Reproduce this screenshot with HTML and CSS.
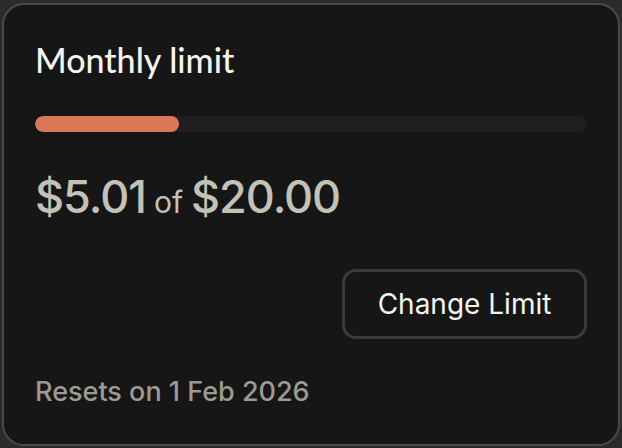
FILE: index.html
```html
<!DOCTYPE html>
<html>
<head>
<meta charset="utf-8">
<link rel="stylesheet" href="styles.css">
</head>
<body>
<div class="card">
  <h1 class="title">Monthly limit</h1>
  <div class="track"><div class="fill" style="width:26%"></div></div>
  <div class="amount"><span class="big">$5.01</span><span class="of">of</span><span class="big">$20.00</span></div>
  <div class="actions"><button class="btn">Change Limit</button></div>
  <div class="reset">Resets on 1 Feb 2026</div>
</div>
</body>
</html>
```
FILE: styles.css
```css
html, body { margin: 0; padding: 0; }
body {
  background: #2b2b29;
  width: 622px;
  height: 448px;
  font-family: "Inter", "Lato", sans-serif;
}
.card {
  box-sizing: border-box;
  margin: 3px 2px 0 2px;
  width: 618px;
  height: 443px;
  background: #161616;
  border: 2px solid #4b4b46;
  border-radius: 22px;
  padding: 35px 31px 0 31px;
  display: flex;
  flex-direction: column;
}
.title {
  margin: 0;
  font-family: "Lato", sans-serif;
  font-weight: 500;
  font-size: 34px;
  line-height: 40px;
  color: #f5f4ef;
}
.track {
  margin-top: 36px;
  height: 16px;
  border-radius: 8px;
  background: #201f1e;
  overflow: hidden;
}
.fill {
  height: 100%;
  background: #d97757;
  border-radius: 8px;
}
.amount {
  margin-top: 38px;
  display: flex;
  align-items: baseline;
  gap: 8px;
  color: #c3c1b8;
  line-height: 54px;
}
.big { font-size: 45px; font-weight: 500; letter-spacing: -1px; }
.of { font-size: 30px; }
.actions {
  margin-top: 40px;
  display: flex;
  justify-content: flex-end;
}
.btn {
  box-sizing: border-box;
  width: 245px;
  height: 70px;
  background: #161616;
  border: 3px solid #3a3a39;
  border-radius: 14px;
  color: #f5f4ef;
  font-family: "Inter", sans-serif;
  font-size: 28px;
  font-weight: 400;
}
.reset {
  margin-top: 37px;
  font-size: 27px;
  line-height: 32px;
  font-weight: 500;
  color: #9c9a92;
}
```
